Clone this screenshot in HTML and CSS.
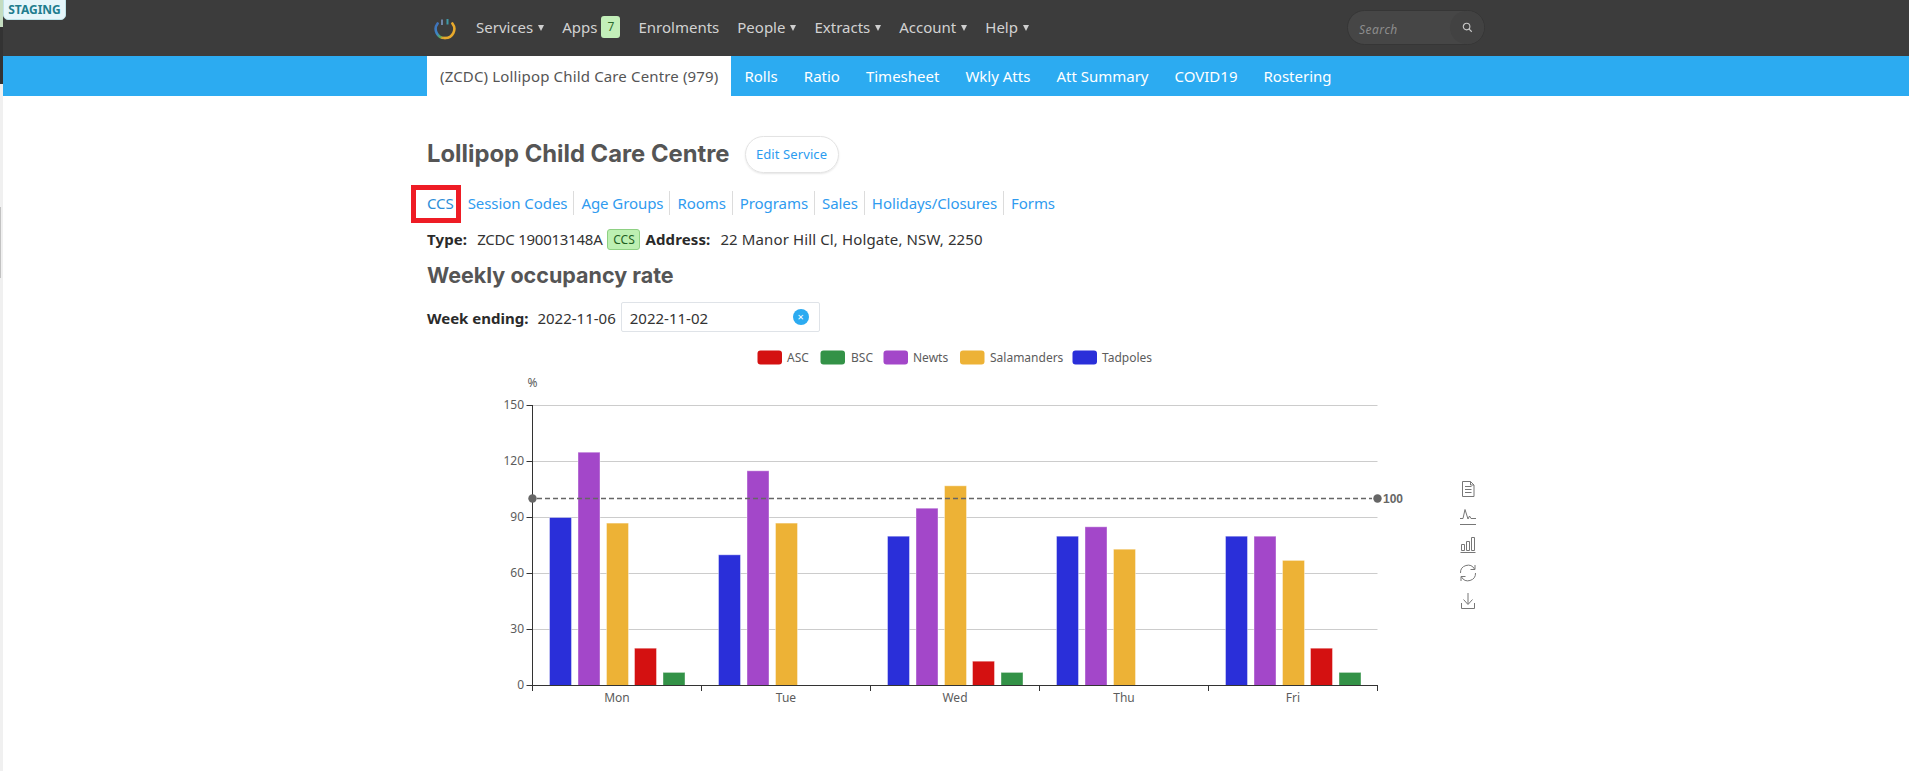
FILE: index.html
```html
<!DOCTYPE html>
<html lang="en">
<head>
<meta charset="utf-8">
<title>Lollipop Child Care Centre</title>
<link rel="stylesheet" href="styles.css">
</head>
<body>
<div class="rail">
  <div class="rail-green"></div>
  <div class="rail-dark"></div>
  <div class="rail-grip"></div>
</div>
<span class="env-badge">STAGING</span>
<div class="page">
  <header class="topbar">
    <nav class="topnav">
      <svg class="logo" viewBox="0 0 24 24" width="24" height="24" aria-hidden="true">
        <defs>
          <linearGradient id="ringLeft" x1="0" y1="0" x2="0.7" y2="1">
            <stop offset="0" stop-color="#3f6fb8"/>
            <stop offset="0.55" stop-color="#3d86c6"/>
            <stop offset="0.85" stop-color="#58a85a"/>
            <stop offset="1" stop-color="#d9a62e"/>
          </linearGradient>
        </defs>
        <path d="M4.6 6.5A9 9 0 0 0 12 21" fill="none" stroke="url(#ringLeft)" stroke-width="2.6" stroke-linecap="round"/>
        <path d="M12 21A9 9 0 0 0 19.4 6.5" fill="none" stroke="#e8a92c" stroke-width="2.6" stroke-linecap="round"/>
        <path d="M9 2.5V8" stroke="#6f86a8" stroke-width="2"/>
        <path d="M14.5 2V7.5" stroke="#3f9aa8" stroke-width="2"/>
      </svg>
      <a class="top-link first">Services<i class="caret"></i></a>
      <a class="top-link apps">Apps<span class="count">7</span></a>
      <a class="top-link">Enrolments</a>
      <a class="top-link">People<i class="caret"></i></a>
      <a class="top-link">Extracts<i class="caret"></i></a>
      <a class="top-link">Account<i class="caret"></i></a>
      <a class="top-link">Help<i class="caret"></i></a>
    </nav>
    <div class="search">
      <span class="search-text">Search</span>
      <span class="search-btn">
        <svg viewBox="0 0 12 12" width="11" height="11" aria-hidden="true"><circle cx="5" cy="5" r="3.6" fill="none" stroke="#c8c8c8" stroke-width="1.2"/><path d="M7.8 7.8L10.6 10.6" stroke="#c8c8c8" stroke-width="1.3"/></svg>
      </span>
    </div>
  </header>
  <div class="subbar">
    <nav class="subnav">
      <a class="sub-link active">(ZCDC) Lollipop Child Care Centre (979)</a>
      <a class="sub-link">Rolls</a>
      <a class="sub-link">Ratio</a>
      <a class="sub-link">Timesheet</a>
      <a class="sub-link">Wkly Atts</a>
      <a class="sub-link">Att Summary</a>
      <a class="sub-link">COVID19</a>
      <a class="sub-link">Rostering</a>
    </nav>
  </div>
  <main class="content">
    <div class="title-row">
      <h1 class="title">Lollipop Child Care Centre</h1>
      <a class="edit-btn">Edit Service</a>
    </div>
    <div class="links">
      <a class="link link-ccs">CCS</a>
      <a class="link">Session Codes</a>
      <a class="link">Age Groups</a>
      <a class="link">Rooms</a>
      <a class="link">Programs</a>
      <a class="link">Sales</a>
      <a class="link">Holidays/Closures</a>
      <a class="link last">Forms</a>
    </div>
    <div class="type-row">
      <b>Type:</b><span class="type-code">ZCDC 190013148A</span><span class="ccs-tag">CCS</span><b>Address:</b><span>22 Manor Hill Cl, Holgate, NSW, 2250</span>
    </div>
    <h2 class="subtitle">Weekly occupancy rate</h2>
    <div class="week-row">
      <b>Week ending:</b><span>2022-11-06</span>
      <div class="date-input"><span>2022-11-02</span><span class="clear">×</span></div>
    </div>
    <svg class="chart" viewBox="427 340 1100 360" width="1100" height="360" role="img" aria-label="Weekly occupancy chart">
      <g class="grid">
        <path d="M532.5 405.5H1377.5M532.5 461.5H1377.5M532.5 517.5H1377.5M532.5 573.5H1377.5M532.5 629.5H1377.5"/>
      </g>
      <g class="bars">
        <g class="tad">
          <rect x="549.5" y="517.5" width="22" height="168"/><rect x="718.5" y="554.8" width="22" height="130.7"/><rect x="887.5" y="536.2" width="22" height="149.3"/><rect x="1056.5" y="536.2" width="22" height="149.3"/><rect x="1225.5" y="536.2" width="22" height="149.3"/>
        </g>
        <g class="newt">
          <rect x="578" y="452.2" width="22" height="233.3"/><rect x="747" y="470.8" width="22" height="214.7"/><rect x="916" y="508.2" width="22" height="177.3"/><rect x="1085" y="526.8" width="22" height="158.7"/><rect x="1254" y="536.2" width="22" height="149.3"/>
        </g>
        <g class="sal">
          <rect x="606.5" y="523.1" width="22" height="162.4"/><rect x="775.5" y="523.1" width="22" height="162.4"/><rect x="944.5" y="485.8" width="22" height="199.7"/><rect x="1113.5" y="549.2" width="22" height="136.3"/><rect x="1282.5" y="560.4" width="22" height="125.1"/>
        </g>
        <g class="asc">
          <rect x="634.5" y="648.2" width="22" height="37.3"/><rect x="972.5" y="661.2" width="22" height="24.3"/><rect x="1310.5" y="648.2" width="22" height="37.3"/>
        </g>
        <g class="bsc">
          <rect x="663" y="672.4" width="22" height="13.1"/><rect x="1001" y="672.4" width="22" height="13.1"/><rect x="1339" y="672.4" width="22" height="13.1"/>
        </g>
      </g>
      <path class="axis" d="M532.5 405V685.5M526.5 405.5H532.5M526.5 461.5H532.5M526.5 517.5H532.5M526.5 573.5H532.5M526.5 629.5H532.5M526.5 685.5H1377.5M532.5 685V691M701.5 685V691M870.5 685V691M1039.5 685V691M1208.5 685V691M1377.5 685V691"/>
      <g class="axis-text end">
        <text x="524" y="409">150</text><text x="524" y="465">120</text><text x="524" y="521">90</text><text x="524" y="577">60</text><text x="524" y="633">30</text><text x="524" y="689">0</text>
      </g>
      <text class="axis-text middle" x="532.5" y="387">%</text>
      <g class="axis-text middle">
        <text x="617" y="702">Mon</text><text x="786" y="702">Tue</text><text x="955" y="702">Wed</text><text x="1124" y="702">Thu</text><text x="1293" y="702">Fri</text>
      </g>
      <path class="mark-line" d="M537 498.5H1372"/>
      <circle class="mark-dot" cx="532.5" cy="498.5" r="4.2"/>
      <circle class="mark-dot" cx="1377.5" cy="498.5" r="4.2"/>
      <text class="mark-label" x="1383" y="502.5">100</text>
      <g class="legend">
        <rect class="asc" x="757.5" y="350.5" width="24.5" height="14" rx="3"/><text x="787" y="361.5">ASC</text>
        <rect class="bsc" x="820.5" y="350.5" width="24.5" height="14" rx="3"/><text x="851" y="361.5">BSC</text>
        <rect class="newt" x="883.5" y="350.5" width="24.5" height="14" rx="3"/><text x="913" y="361.5">Newts</text>
        <rect class="sal" x="960" y="350.5" width="24.5" height="14" rx="3"/><text x="990" y="361.5">Salamanders</text>
        <rect class="tad" x="1072.5" y="350.5" width="24.5" height="14" rx="3"/><text x="1102" y="361.5">Tadpoles</text>
      </g>
      <g class="tools">
        <path d="M1462.5 481.5H1470.5L1474 485V496.5H1462.5ZM1470.5 481.5V485H1474M1465 486.5H1471.5M1465 489.5H1471.5M1465 492.5H1471.5"/>
        <path d="M1460 524.5H1476M1460 518.5H1463L1465 509.5L1468 519L1469.5 516L1471 518.5H1476"/>
        <path d="M1460.5 552.5H1475.5M1461.5 544.5H1464.5V550.5H1461.5ZM1466.5 541.5H1469.5V550.5H1466.5ZM1471.5 537.5H1474.5V550.5H1471.5Z"/>
        <path d="M1460.5 573A7.5 7.5 0 0 1 1474.5 569M1475 565V569.5H1470.5M1475.5 573A7.5 7.5 0 0 1 1461.5 577M1461 581V576.5H1465.5"/>
        <path d="M1468 593V604M1463.5 599.5L1468 604.5L1472.5 599.5M1461.5 603V608.5H1474.5V603"/>
      </g>
    </svg>
  </main>
</div>
</body>
</html>
```
FILE: styles.css
```css
* { box-sizing: border-box; }
html, body { margin: 0; padding: 0; }
body {
  display: flex;
  min-height: 771px;
  overflow: hidden;
  background: #fff;
  color: #444;
  font-family: "Noto Sans", "Open Sans", sans-serif;
  font-size: 15px;
}
a { cursor: pointer; }

.rail { width: 3px; flex: none; background: #f0f0f0; display: flex; flex-direction: column; }
.rail-green { height: 27px; background: #c4dcc0; }
.rail-dark { height: 57px; background: #333; }
.rail-grip { height: 71px; width: 1px; margin-top: 123px; background: #c2c2c2; }

.env-badge {
  position: absolute;
  left: 3px;
  top: -1px;
  height: 21px;
  width: 63px;
  border: 1px solid #bfe3e8;
  border-radius: 0 0 5px 5px;
  background: #e6f6fa;
  color: #217d8e;
  font-size: 12px;
  font-weight: 700;
  line-height: 19px;
  text-align: center;
}

.page { flex: 1; min-width: 0; }

.topbar {
  height: 56px;
  background: #3c3c3c;
  display: flex;
  align-items: center;
  padding-left: 430px;
}
.topnav { display: flex; align-items: center; width: 914px; margin-top: -2px; }
.logo { flex: none; margin: 4px 0 0 0; }
.top-link {
  color: #d2d2d2;
  font-size: 15px;
  margin-left: 18px;
  display: flex;
  align-items: center;
  white-space: nowrap;
}
.top-link.first { margin-left: 19px; }
.caret {
  width: 0; height: 0;
  margin-left: 5px;
  margin-top: 2px;
  border-left: 3.5px solid transparent;
  border-right: 3.5px solid transparent;
  border-top: 6px solid #cfcfcf;
}
.count {
  width: 19px;
  height: 22px;
  margin-left: 4px;
  border-radius: 3px;
  background: #c3efb9;
  color: #2c6a2c;
  font-size: 12px;
  line-height: 22px;
  text-align: center;
}
.search {
  width: 138px;
  height: 35px;
  margin-top: -1px;
  border: 1px solid #363636;
  border-radius: 18px;
  background: #464646;
  display: flex;
  align-items: center;
  justify-content: space-between;
}
.search-text { color: #8d8d8d; font-size: 12px; font-style: italic; padding: 3px 0 0 11px; letter-spacing: .5px; }
.search-btn {
  width: 34px;
  height: 33px;
  border-radius: 17px;
  background: #424242;
  display: flex;
  align-items: center;
  justify-content: center;
}

.subbar { height: 40px; background: #2cabf1; padding-left: 424px; }
.subnav { display: flex; height: 40px; }
.sub-link {
  color: #fff;
  font-size: 15px;
  line-height: 40px;
  padding: 0 13px;
  white-space: nowrap;
}
.sub-link.active { background: #fff; color: #555; letter-spacing: .15px; }

.content { padding: 40px 0 0 424px; }
.title-row { display: flex; align-items: center; height: 37px; }
.title {
  margin: 0 0 2px;
  font-family: Inter, sans-serif;
  font-size: 23.8px;
  font-weight: 700;
  color: #555;
  line-height: 30px;
}
.edit-btn {
  margin-left: 15px;
  height: 37px;
  width: 94px;
  border: 1px solid #e3e3e3;
  border-radius: 19px;
  box-shadow: 0 1px 2px rgba(0,0,0,.1);
  color: #2b9cf0;
  font-size: 13px;
  letter-spacing: .1px;
  line-height: 35px;
  text-align: center;
}
.links { display: flex; align-items: center; height: 24px; margin-top: 18px; }
.link {
  color: #2f9bef;
  font-size: 15px;
  letter-spacing: -.07px;
  line-height: 24px;
  padding: 0 6px 0 7px;
  border-right: 1px solid #dcdcdc;
  white-space: nowrap;
}
.link.last { border-right: 0; }
.link-ccs {
  padding: 0;
  margin-right: 7px;
  border-right: 0;
  position: relative;
  color: #2c8ed8;
}
.link-ccs::after {
  content: "";
  position: absolute;
  left: -16px;
  top: -6px;
  width: 40px;
  height: 28px;
  border: 5px solid #ee1c25;
}
.type-row { display: flex; align-items: center; gap: 5px; height: 22px; margin-top: 13px; color: #333; letter-spacing: .12px; }
.type-row b, .week-row b { color: #2a2a2a; margin-right: 5px; }
.type-code { letter-spacing: -.25px; }
.ccs-tag {
  height: 21px;
  width: 33px;
  border: 1px solid #8ed083;
  border-radius: 3px;
  background: #bdf0b2;
  color: #1f5f1f;
  font-size: 12px;
  letter-spacing: 0;
  line-height: 19px;
  text-align: center;
}
.subtitle {
  margin: 12px 0 0;
  height: 30px;
  font-family: Inter, sans-serif;
  font-size: 21.5px;
  font-weight: 700;
  line-height: 26px;
  color: #555;
}
.week-row { display: flex; align-items: center; height: 30px; margin-top: 10px; color: #333; gap: 4px; }
.week-row > b, .week-row > span, .date-input > span:first-child { padding-top: 2px; }
.date-input {
  width: 199px;
  height: 30px;
  margin-left: 1px;
  border: 1px solid #dfe3e8;
  border-radius: 2px;
  padding: 0 10px 0 8px;
  display: flex;
  align-items: center;
  justify-content: space-between;
}
.clear {
  width: 16px;
  height: 16px;
  border-radius: 50%;
  background: #2cabf1;
  color: #fff;
  font-size: 11px;
  line-height: 16px;
  text-align: center;
}

.chart { display: block; margin-top: 8px; overflow: visible; }
.chart text { font-family: "Noto Sans", sans-serif; font-size: 12px; fill: #5c5c5c; }
.chart .end text { text-anchor: end; }
.chart .middle, .chart .middle text { text-anchor: middle; }
.grid path { stroke: #ccc; stroke-width: 1; fill: none; }
.axis { stroke: #333; stroke-width: 1; fill: none; }
.tad { fill: #2a2fd9; }
.newt { fill: #a347c9; }
.sal { fill: #edb236; }
.asc { fill: #d41111; }
.bsc { fill: #339247; }
.bars rect { stroke-width: 1; stroke: rgba(255,255,255,.4); }
.mark-line { stroke: #666; stroke-width: 1.3; stroke-dasharray: 5 3; fill: none; }
.mark-dot { fill: #666; }
.chart .mark-label { font-family: "Liberation Sans", sans-serif; font-weight: 700; fill: #666; }
.tools path { fill: none; stroke: #777; stroke-width: 1; }
```
